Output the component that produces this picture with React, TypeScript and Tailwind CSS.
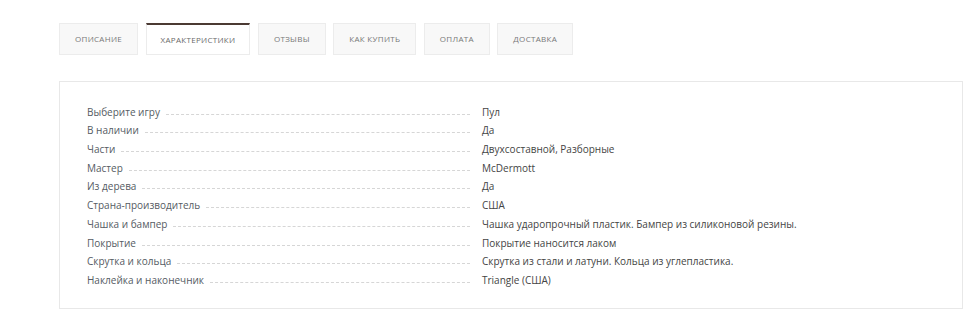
import React from "react";

const tabs = ["Описание", "Характеристики", "Отзывы", "Как купить", "Оплата", "Доставка"];

const specs: [string, string][] = [
  ["Выберите игру", "Пул"],
  ["В наличии", "Да"],
  ["Части", "Двухсоставной, Разборные"],
  ["Мастер", "McDermott"],
  ["Из дерева", "Да"],
  ["Страна-производитель", "США"],
  ["Чашка и бампер", "Чашка ударопрочный пластик. Бампер из силиконовой резины."],
  ["Покрытие", "Покрытие наносится лаком"],
  ["Скрутка и кольца", "Скрутка из стали и латуни. Кольца из углепластика."],
  ["Наклейка и наконечник", "Triangle (США)"],
];

const App: React.FC = () => {
  return (
    <div
      className="w-[977px] h-[323px] bg-white pl-[59px] pr-[15px] pt-[23px]"
      style={{ fontFamily: '"Open Sans", "Liberation Sans", sans-serif' }}
    >
      <div className="flex gap-[7.5px]">
        {tabs.map((t, i) =>
          i === 1 ? (
            <div
              key={t}
              className="h-[32px] px-[14px] flex items-center bg-white border border-[#ececec] border-t-2 border-t-[#4b3a33] uppercase text-[8px] tracking-[0.3px] text-[#6a6a6a]"
            >
              {t}
            </div>
          ) : (
            <div
              key={t}
              className="h-[32px] px-[15px] flex items-center bg-[#f8f8f8] border border-[#ececec] uppercase text-[8px] tracking-[0.3px] text-[#777]"
            >
              {t}
            </div>
          )
        )}
      </div>

      <div className="mt-[26px] w-[904px] border border-[#e8e8e8] bg-white pl-[27px] pr-[20px] pt-[18px] pb-[21px]">
        {specs.map(([label, value]) => (
          <div key={label} className="flex items-end h-[18.7px] text-[10px] leading-[14px]">
            <div className="w-[383px] flex items-end shrink-0">
              <span className="text-[#555b63] pr-[6px] whitespace-nowrap">{label}</span>
              <span className="flex-1 border-b border-dashed border-[#d6d6d6] mb-[4px]" />
            </div>
            <span className="pl-[12px] text-[#444]">{value}</span>
          </div>
        ))}
      </div>
    </div>
  );
};

export default App;
